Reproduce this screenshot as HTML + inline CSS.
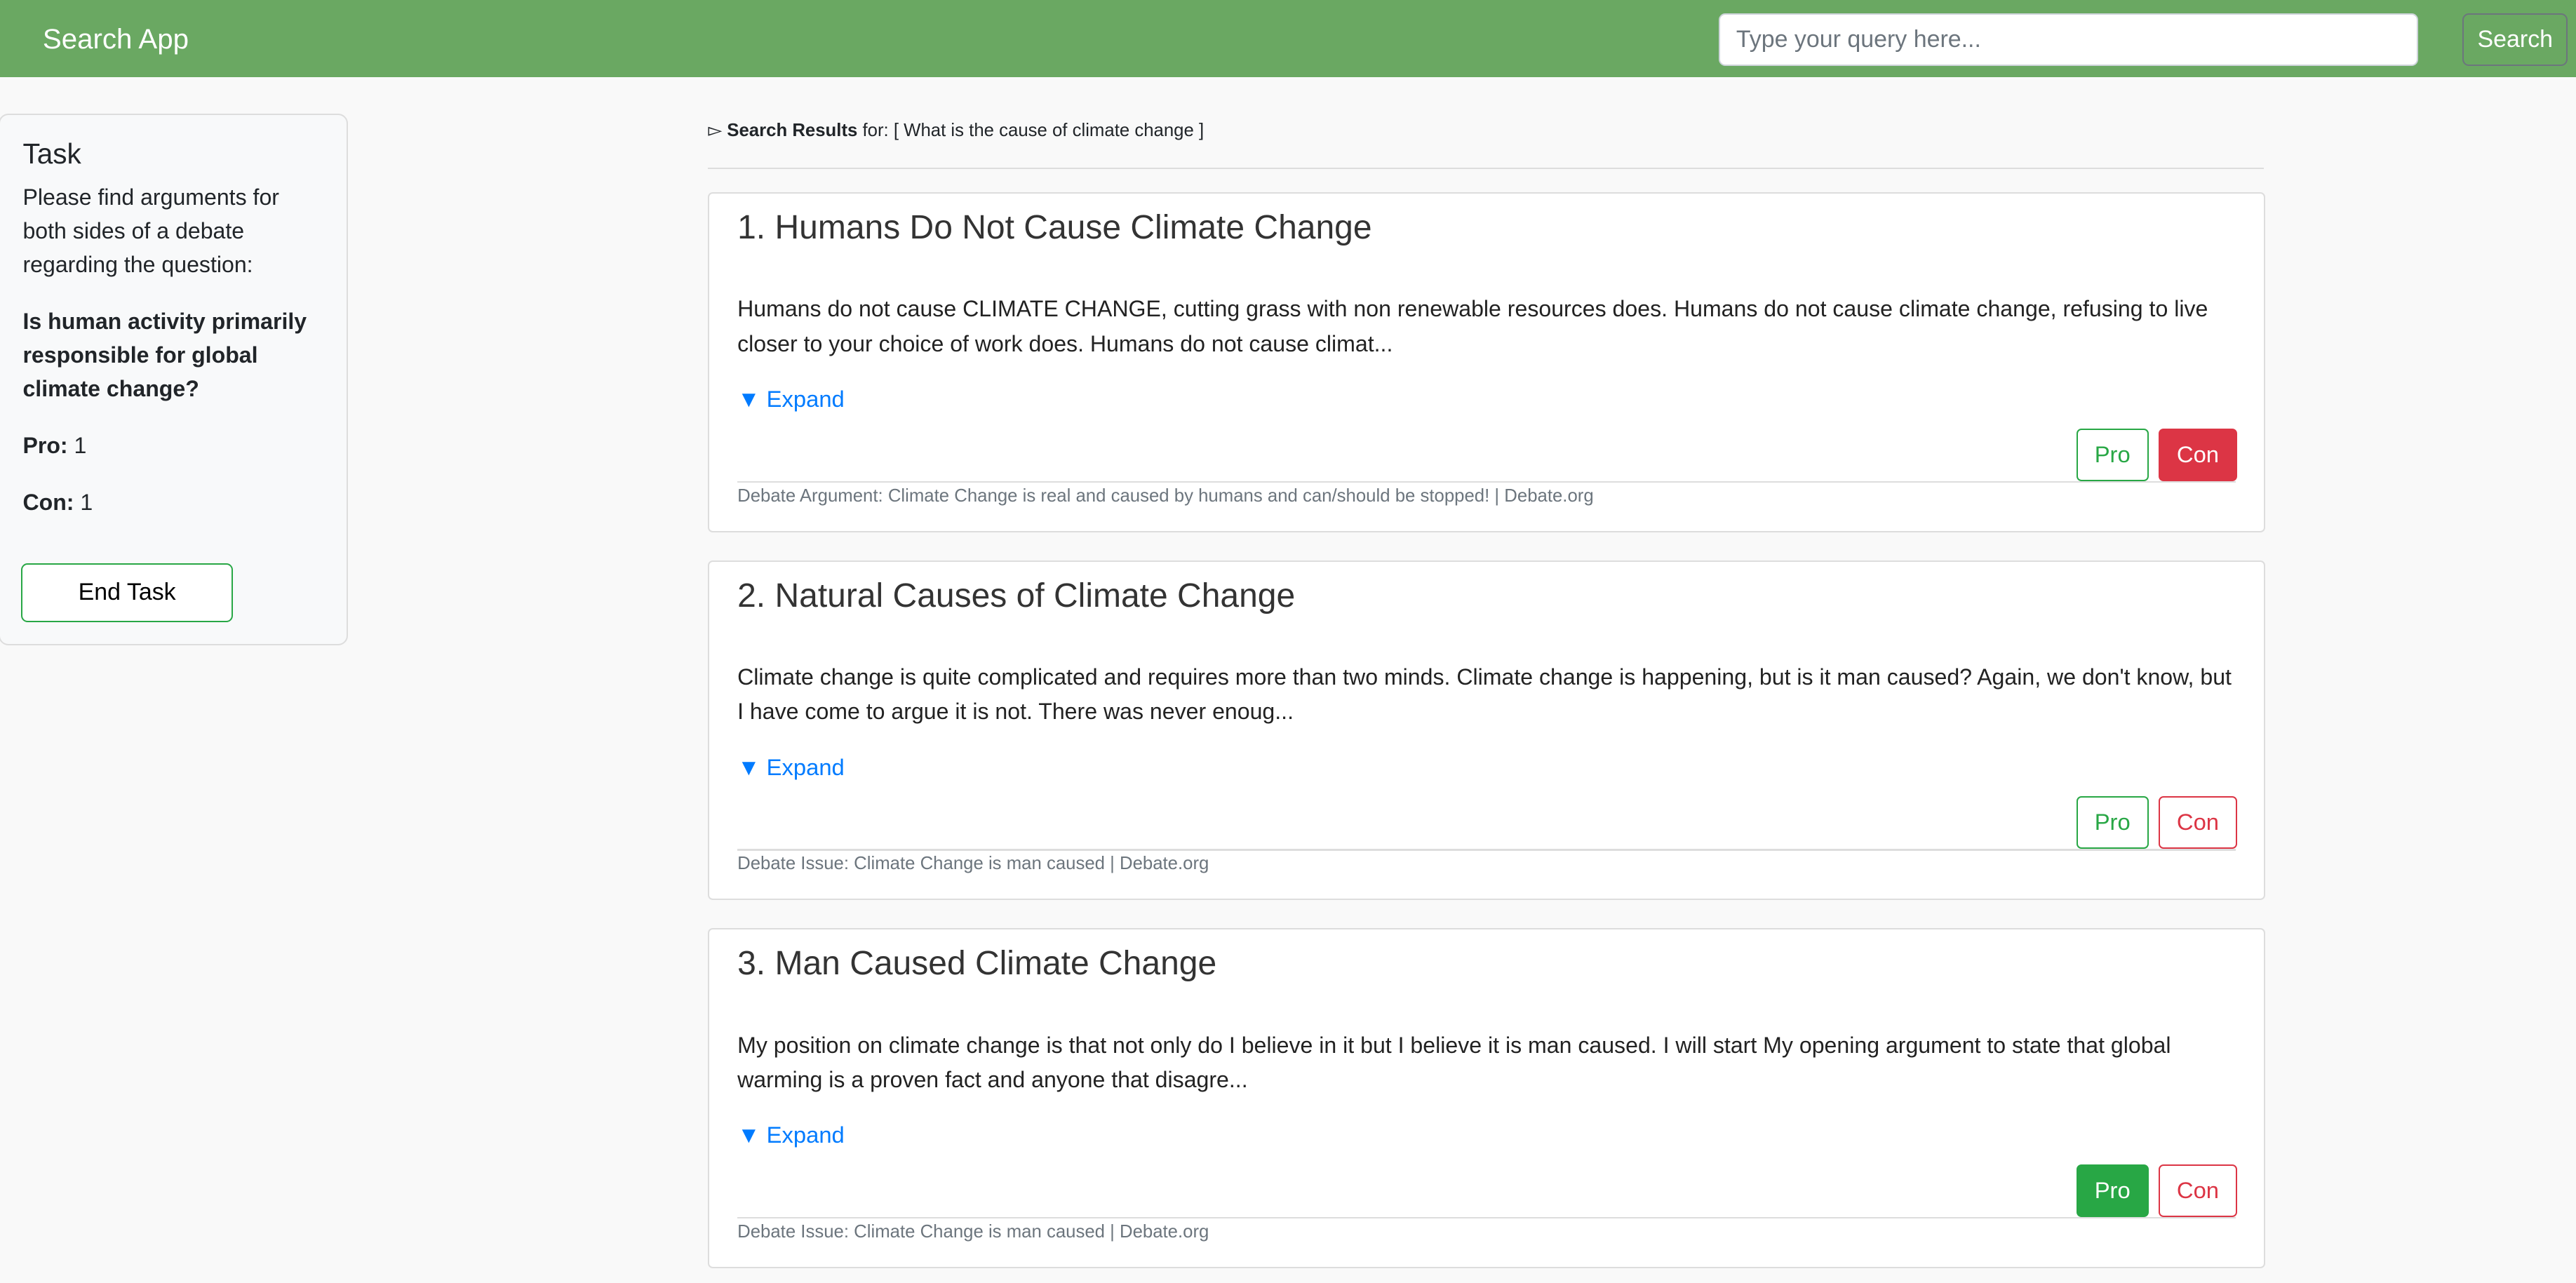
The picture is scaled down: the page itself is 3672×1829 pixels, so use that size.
<!DOCTYPE html>
<html><head><meta charset="utf-8"><style>
html,body{margin:0;padding:0;}
body{width:1568px;height:781px;zoom:2.3418;background:#f9f9f9;font-family:"Liberation Sans",Arial,sans-serif;color:#212529;position:relative;overflow:hidden;}
.nav{position:absolute;left:0;top:0;width:1568px;height:47px;background:#6aa862;}
.brand{position:absolute;left:26px;top:14px;font-size:17.2px;color:#fff;}
.inp{position:absolute;left:1046px;top:8px;width:426px;height:32px;background:#fff;border:1px solid #ced4da;border-radius:4px;box-sizing:border-box;font-size:14.5px;color:#6c757d;padding:7px 10px;}
.sbtn{position:absolute;left:1499px;top:8px;width:64px;height:32px;border:1px solid #6c757d;border-radius:4px;box-sizing:border-box;color:#fff;font-size:14.5px;text-align:center;line-height:30px;}
.side{position:absolute;left:-1px;top:69px;width:213px;height:324px;background:#f8f9fa;border:1px solid #ddd;border-radius:6px;box-sizing:border-box;padding:0 13px 0 14px;}
.side h3{margin:13px 0 0;font-size:17.3px;font-weight:normal;line-height:22px;}
.side p{margin:5px 0 0;font-size:13.7px;line-height:20.5px;}
.endb{position:absolute;left:13px;top:273px;width:129px;height:36px;box-sizing:border-box;border:1px solid #28a745;border-radius:4px;background:#fff;color:#000;font-size:14.5px;text-align:center;line-height:34px;}
.hdr{position:absolute;left:431px;top:73px;font-size:11px;}
.hr{position:absolute;left:431px;top:102px;width:947px;height:1px;background:#ddd;}
.card{position:absolute;left:431px;width:948px;height:207px;background:#fff;border:1px solid #ddd;border-radius:3px;box-sizing:border-box;}
.card h2{position:absolute;left:17px;top:9px;margin:0;font-size:20.5px;font-weight:normal;color:#333;}
.card .b{position:absolute;left:17px;top:60px;width:912px;font-size:13.7px;line-height:21px;color:#222;}
.card .e{position:absolute;left:17px;top:117px;font-size:14px;color:#007bff;}
.card .l{position:absolute;left:17px;top:175px;width:912px;height:1px;background:#ddd;}
.card .f{position:absolute;left:17px;top:178px;font-size:11px;color:#6c757d;}
.btn{position:absolute;top:143px;height:32px;box-sizing:border-box;border-radius:3px;font-size:14px;text-align:center;line-height:30px;}
.pro{left:832px;width:44px;border:1px solid #28a745;color:#28a745;background:#fff;}
.con{left:882px;width:48px;border:1px solid #dc3545;color:#dc3545;background:#fff;}
.pro.on{background:#28a745;color:#fff;}
.con.on{background:#dc3545;color:#fff;}
</style></head><body>
<div class="nav"><div class="brand">Search App</div><div class="inp">Type your query here...</div><div class="sbtn">Search</div></div>
<div class="side"><h3>Task</h3>
<p>Please find arguments for both sides of a debate regarding the question:</p>
<p style="margin-top:14px"><b>Is human activity primarily responsible for global climate change?</b></p>
<p style="margin-top:14px"><b>Pro:</b> 1</p>
<p style="margin-top:14px"><b>Con:</b> 1</p>
<div class="endb">End Task</div></div>
<div class="hdr">▻ <b>Search Results</b> for: [ What is the cause of climate change ]</div>
<div class="hr"></div>
<div class="card" style="top:117px"><h2>1. Humans Do Not Cause Climate Change</h2>
<div class="b">Humans do not cause CLIMATE CHANGE, cutting grass with non renewable resources does. Humans do not cause climate change, refusing to live closer to your choice of work does. Humans do not cause climat...</div>
<div class="e">▼ Expand</div><div class="l"></div><div class="btn pro">Pro</div><div class="btn con on">Con</div>
<div class="f">Debate Argument: Climate Change is real and caused by humans and can/should be stopped! | Debate.org</div></div>
<div class="card" style="top:341px"><h2>2. Natural Causes of Climate Change</h2>
<div class="b">Climate change is quite complicated and requires more than two minds. Climate change is happening, but is it man caused? Again, we don't know, but I have come to argue it is not. There was never enoug...</div>
<div class="e">▼ Expand</div><div class="l"></div><div class="btn pro">Pro</div><div class="btn con">Con</div>
<div class="f">Debate Issue: Climate Change is man caused | Debate.org</div></div>
<div class="card" style="top:565px"><h2>3. Man Caused Climate Change</h2>
<div class="b">My position on climate change is that not only do I believe in it but I believe it is man caused. I will start My opening argument to state that global warming is a proven fact and anyone that disagre...</div>
<div class="e">▼ Expand</div><div class="l"></div><div class="btn pro on">Pro</div><div class="btn con">Con</div>
<div class="f">Debate Issue: Climate Change is man caused | Debate.org</div></div>
</body></html>
